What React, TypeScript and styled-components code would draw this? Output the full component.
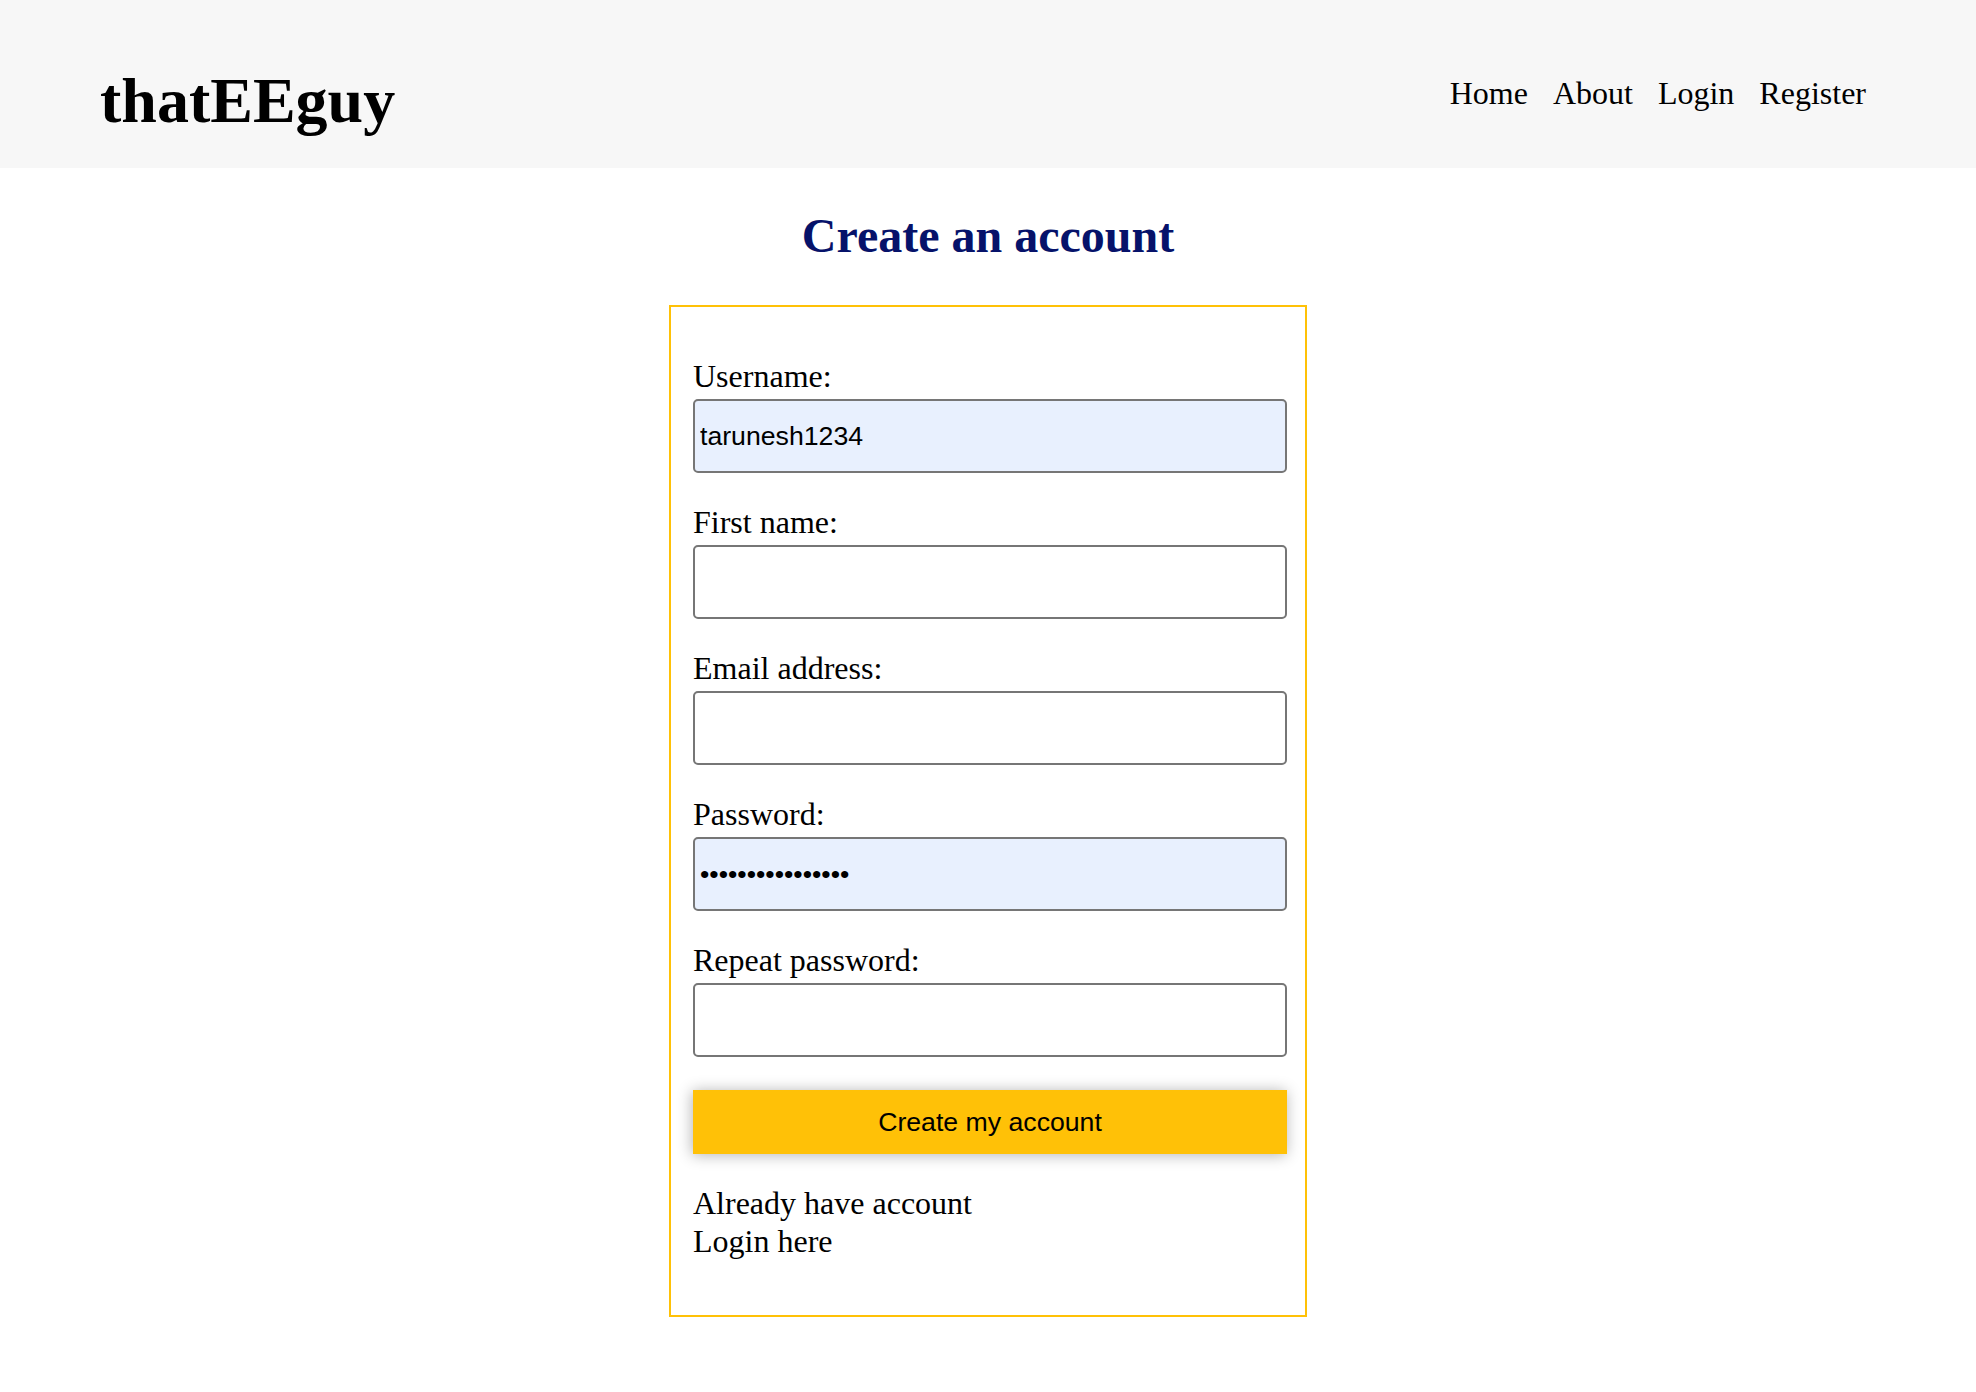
import styled, { createGlobalStyle } from "styled-components";

const GlobalStyle = createGlobalStyle`
  body {
    margin: 0;
    background: #ffffff;
    font-family: "Liberation Serif", "Times New Roman", serif;
    color: #000000;
  }
`;

type Field = {
  id: string;
  label: string;
  type: string;
  value?: string;
  filled?: boolean;
};

const fields: Field[] = [
  { id: "username", label: "Username:", type: "text", value: "tarunesh1234", filled: true },
  { id: "first_name", label: "First name:", type: "text" },
  { id: "email", label: "Email address:", type: "email" },
  { id: "password", label: "Password:", type: "password", value: "tarunesh12345678", filled: true },
  { id: "password2", label: "Repeat password:", type: "password" },
];

const App = () => {
  return (
    <>
      <GlobalStyle />
      <Header>
        <Logo>thatEEguy</Logo>
        <Nav>
          <NavLink href="#">Home</NavLink>
          <NavLink href="#">About</NavLink>
          <NavLink href="#">Login</NavLink>
          <NavLink href="#">Register</NavLink>
        </Nav>
      </Header>
      <Main>
        <Title>Create an account</Title>
        <Card>
          {fields.map((f) => (
            <FieldGroup key={f.id}>
              <Label htmlFor={f.id}>{f.label}</Label>
              <Input
                id={f.id}
                type={f.type}
                defaultValue={f.value}
                $filled={f.filled}
              />
            </FieldGroup>
          ))}
          <SubmitButton type="button">Create my account</SubmitButton>
          <Footnote>
            Already have account
            <br />
            <FootLink href="#">Login here</FootLink>
          </Footnote>
        </Card>
      </Main>
    </>
  );
};

const Header = styled.header`
  display: flex;
  justify-content: space-between;
  align-items: flex-start;
  height: 168px;
  box-sizing: border-box;
  padding: 0 110px 0 100px;
  background: #f7f7f7;
`;

const Logo = styled.div`
  margin-top: 64px;
  font-size: 64px;
  font-weight: 700;
  line-height: 73px;
`;

const Nav = styled.nav`
  display: flex;
  gap: 25px;
  margin-top: 75px;
`;

const NavLink = styled.a`
  font-size: 32px;
  line-height: 37px;
  color: #000000;
  text-decoration: none;
`;

const Main = styled.main`
  display: flex;
  flex-direction: column;
  align-items: center;
  padding-bottom: 60px;
`;

const Title = styled.h1`
  margin: 40px 0 42px;
  font-size: 48px;
  line-height: 55px;
  font-weight: 700;
  color: #06126a;
`;

const Card = styled.div`
  width: 638px;
  box-sizing: border-box;
  border: 2px solid #ffc107;
  padding: 51px 18px 55px 22px;
`;

const FieldGroup = styled.div`
  margin-bottom: 31px;
  &:last-of-type {
    margin-bottom: 33px;
  }
`;

const Label = styled.label`
  display: block;
  font-size: 32px;
  line-height: 37px;
`;

const Input = styled.input<{ $filled?: boolean }>`
  display: block;
  width: 100%;
  box-sizing: border-box;
  height: 74px;
  margin-top: 4px;
  padding: 0 5px;
  border: 2px solid #767676;
  border-radius: 5px;
  background: ${(p) => (p.$filled ? "#e8f0fe" : "#ffffff")};
  font-family: "Liberation Sans", Arial, sans-serif;
  font-size: 26.67px;
  color: #000000;
  outline: none;
`;

const SubmitButton = styled.button`
  display: block;
  width: 100%;
  height: 64px;
  border: none;
  background: #ffc107;
  box-shadow: -1px 1px 14px rgba(0, 0, 0, 0.3);
  font-family: "Liberation Sans", Arial, sans-serif;
  font-size: 26.67px;
  color: #000000;
  cursor: pointer;
`;

const Footnote = styled.p`
  margin: 30px 0 0;
  font-size: 32px;
  line-height: 38px;
`;

const FootLink = styled.a`
  color: #000000;
  text-decoration: none;
`;

export default App;
